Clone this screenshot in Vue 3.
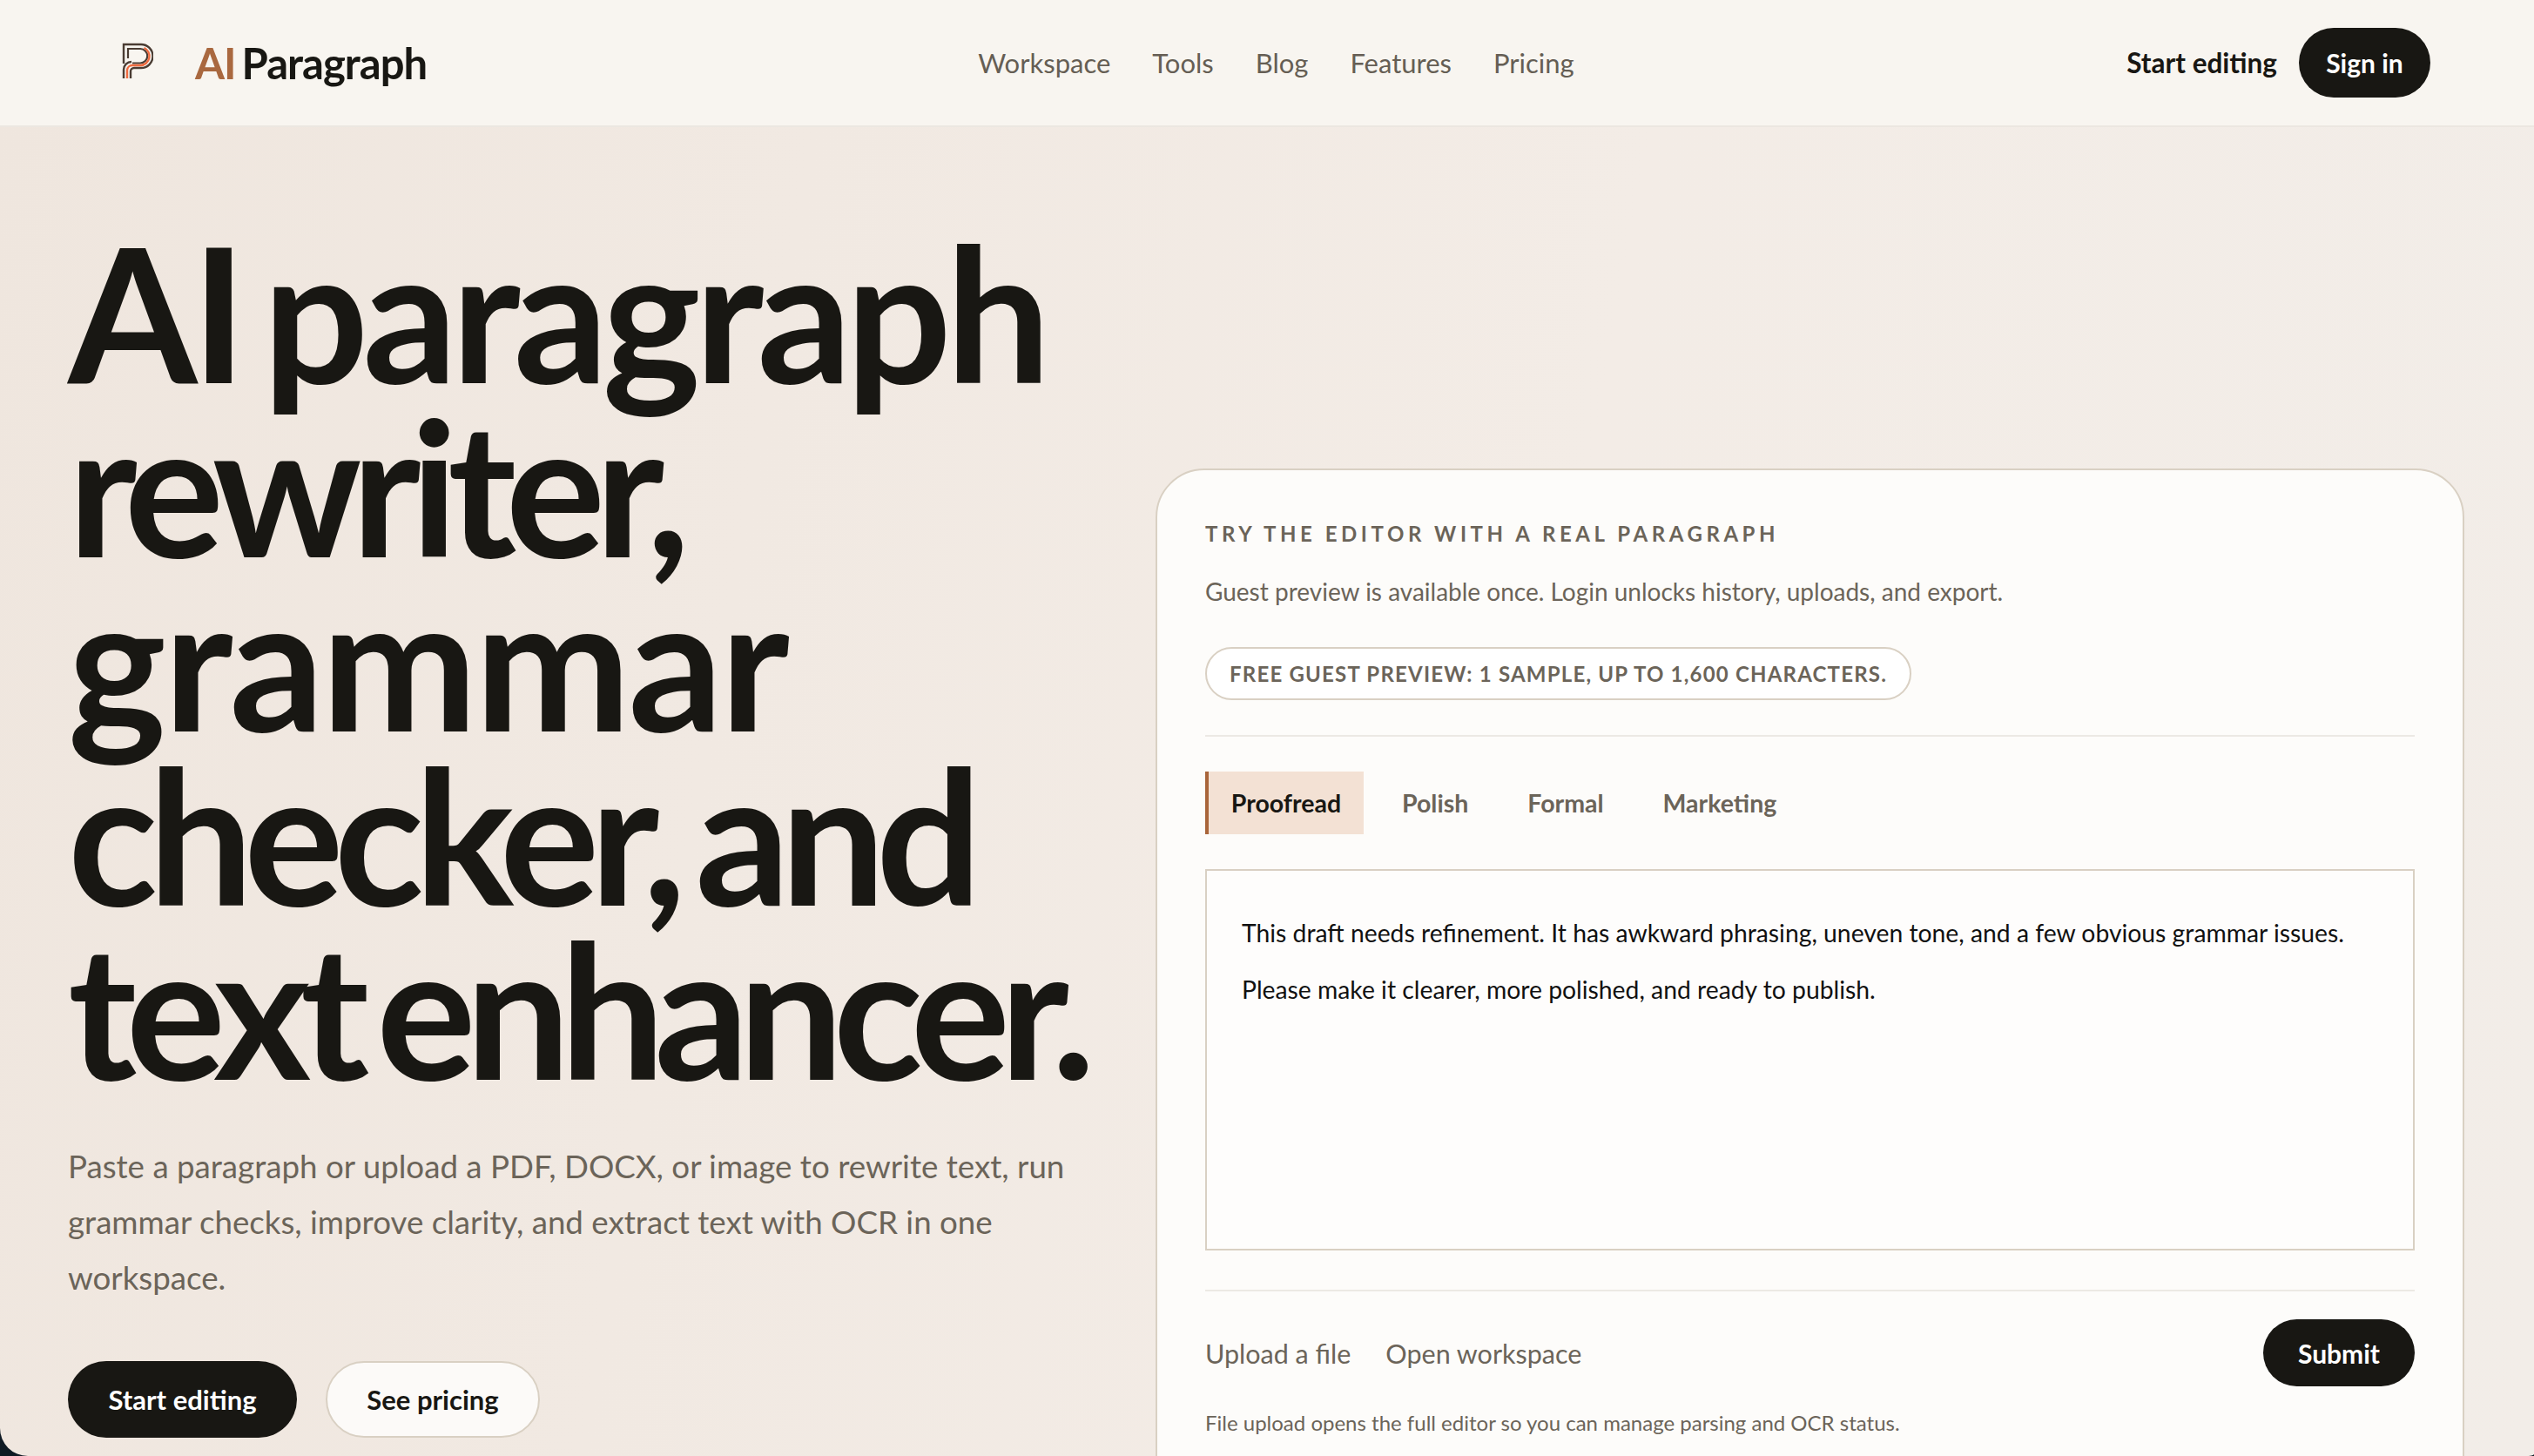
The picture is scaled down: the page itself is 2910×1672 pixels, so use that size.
<template>
  <div class="page">
    <header class="topbar">
      <div class="brand">
        <svg class="logo" viewBox="0 0 36 42" width="36" height="42" fill="none">
          <path d="M2 24V2H22a13.500 13.500 0 0 1 0 27h-8a4 4 0 0 0-4 4V41" stroke="#4a3c33" stroke-width="2.400" />
          <path d="M2 41V31a9 9 0 0 1 9-9" stroke="#4a3c33" stroke-width="2.400" />
          <path d="M7 18V7h14a8 8 0 0 1 0 16.500h-9" stroke="#4a3c33" stroke-width="2.200" />
          <path d="M6 41V31.500a6 6 0 0 1 6-5.500h9.500a10.500 10.500 0 0 0 4-20" stroke="#ee6a3f" stroke-width="2.400" />
        </svg>
        <span class="brand-name"><span class="brand-ai">AI</span> Paragraph</span>
      </div>
      <nav class="nav">
        <a v-for="link in navLinks" :key="link">{{ link }}</a>
      </nav>
      <div class="top-actions">
        <a class="top-link">Start editing</a>
        <button type="button" class="btn btn-dark btn-signin">Sign in</button>
      </div>
    </header>

    <main class="hero">
      <section class="hero-copy">
        <h1>
          <span class="line line-1">AI paragraph</span>
          <span class="line line-2">rewriter,</span>
          <span class="line line-3">grammar</span>
          <span class="line line-4">checker, and</span>
          <span class="line line-5">text enhancer.</span>
        </h1>
        <p class="lead">
          Paste a paragraph or upload a PDF, DOCX, or image to rewrite text, run grammar checks,
          improve clarity, and extract text with OCR in one workspace.
        </p>
        <div class="cta-row">
          <button type="button" class="btn btn-dark btn-large">Start editing</button>
          <button type="button" class="btn btn-light btn-large">See pricing</button>
        </div>
      </section>

      <section class="editor-card">
        <p class="eyebrow">Try the editor with a real paragraph</p>
        <p class="card-sub">Guest preview is available once. Login unlocks history, uploads, and export.</p>
        <span class="pill">Free guest preview: 1 sample, up to 1,600 characters.</span>
        <div class="tabs">
          <button
            v-for="tab in tabs"
            :key="tab"
            type="button"
            class="tab"
            :class="{ active: tab === activeTab }"
            @click="activeTab = tab"
          >
            {{ tab }}
          </button>
        </div>
        <div class="draft">
          <p>This draft needs refinement. It has awkward phrasing, uneven tone, and a few obvious grammar issues.</p>
          <p>Please make it clearer, more polished, and ready to publish.</p>
        </div>
        <div class="card-actions">
          <div class="card-links">
            <a>Upload a file</a>
            <a>Open workspace</a>
          </div>
          <button type="button" class="btn btn-dark btn-submit">Submit</button>
        </div>
        <p class="note">File upload opens the full editor so you can manage parsing and OCR status.</p>
      </section>
    </main>
  </div>
</template>

<script setup>
import { ref } from 'vue';

const navLinks = ['Workspace', 'Tools', 'Blog', 'Features', 'Pricing'];
const tabs = ['Proofread', 'Polish', 'Formal', 'Marketing'];
const activeTab = ref('Proofread');
</script>

<style>
html,
body {
  margin: 0;
  background: #0f1a24;
  overflow: hidden;
}
</style>

<style scoped>
.page {
  width: 2910px;
  height: 1672px;
  overflow: hidden;
  border-radius: 0 0 10px 32px / 0 0 2px 32px;
  background: linear-gradient(100deg, #efe6de 0%, #f3ece6 60%, #f2ede8 100%);
  font-family: Lato, "Noto Sans", sans-serif;
  color: #181713;
}

.topbar {
  height: 144px;
  box-sizing: content-box;
  border-bottom: 2px solid #ece7e1;
  background: #f8f5f0;
  padding: 0 119px 0 140px;
  display: grid;
  grid-template-columns: 1fr auto 1fr;
  align-items: center;
}

.brand {
  display: flex;
  align-items: center;
  gap: 48px;
}

.logo {
  width: 36px;
  height: 42px;
  margin-bottom: 4px;
}

.brand-name {
  font-size: 49px;
  font-weight: 700;
  letter-spacing: -0.02em;
  word-spacing: -4px;
}

.brand-ai {
  color: #a9683f;
}

.nav {
  display: flex;
  gap: 48px;
  font-size: 31px;
  color: #655e54;
}

.top-actions {
  justify-self: end;
  display: flex;
  align-items: center;
  gap: 25px;
}

.top-link {
  font-size: 31.500px;
  font-weight: 700;
}

.btn {
  border-radius: 999px;
  font-family: inherit;
  font-weight: 700;
  cursor: pointer;
}

.btn-dark {
  border: none;
  background: #181713;
  color: #ffffff;
}

.btn-light {
  border: 2px solid #d9d0c3;
  background: #fcfaf8;
  color: #181713;
}

.btn-signin {
  width: 151px;
  height: 80px;
  font-size: 30px;
}

.hero {
  display: grid;
  grid-template-columns: 1249px 1503px;
  padding-left: 78px;
  align-items: start;
}

h1 {
  margin: 0;
  padding-top: 112px;
  width: 1240px;
  font-size: 214px;
  font-weight: 700;
  line-height: 200px;
  word-spacing: -20px;
  color: #181713;
}

.line {
  display: block;
  white-space: nowrap;
}

.line-1 {
  letter-spacing: -6.800px;
}

.line-2 {
  letter-spacing: -11.900px;
}

.line-3 {
  letter-spacing: -3px;
}

.line-4 {
  letter-spacing: -10.800px;
}

.line-5 {
  letter-spacing: -12.100px;
}

.lead {
  margin: 49px 0 0;
  width: 1180px;
  font-size: 36.700px;
  line-height: 64px;
  color: #6b6459;
}

.cta-row {
  display: flex;
  gap: 33px;
  margin-top: 64px;
}

.btn-large {
  height: 88px;
  font-size: 31px;
}

.btn-dark.btn-large {
  width: 263px;
}

.btn-light.btn-large {
  width: 246px;
}

.editor-card {
  margin-top: 392px;
  box-sizing: border-box;
  height: 1200px;
  border: 2px solid #d9d0c3;
  border-radius: 56px;
  background: #fdfcfa;
  padding: 56px 55px;
  display: flex;
  flex-direction: column;
  align-items: flex-start;
}

.eyebrow {
  margin: 2px 0 0;
  font-size: 24px;
  line-height: 30px;
  font-weight: 700;
  letter-spacing: 0.19em;
  text-transform: uppercase;
  color: #6b6459;
}

.card-sub {
  margin: 29px 0 0;
  font-size: 28px;
  line-height: 44px;
  color: #6b6459;
}

.pill {
  margin-top: 42px;
  box-sizing: border-box;
  height: 61px;
  padding: 0 26px;
  display: flex;
  align-items: center;
  border: 2px solid #d9d0c3;
  border-radius: 999px;
  background: #ffffff;
  font-size: 24px;
  font-weight: 700;
  letter-spacing: 0.05em;
  text-transform: uppercase;
  color: #6b6459;
}

.tabs {
  margin-top: 40px;
  align-self: stretch;
  border-top: 2px solid #ece9e4;
  padding-top: 40px;
  display: flex;
}

.tab {
  height: 72px;
  padding: 0 24px;
  border: none;
  border-left: 4px solid transparent;
  background: transparent;
  font-family: inherit;
  font-size: 28.500px;
  font-weight: 700;
  color: #6b6459;
  cursor: pointer;
  margin-right: 16px;
}

.tab.active {
  width: 182px;
  border-left-color: #a9653a;
  background: #f3e1d4;
  color: #181713;
}

.draft {
  margin-top: 40px;
  align-self: stretch;
  box-sizing: border-box;
  height: 438px;
  border: 2px solid #d9d0c3;
  background: #fefdfc;
  padding: 49px 40px 40px;
  font-size: 28.300px;
  line-height: 44px;
  color: #111111;
}

.draft p {
  margin: 0 0 21px;
}

.card-actions {
  margin-top: 45px;
  align-self: stretch;
  border-top: 2px solid #ece9e4;
  padding-top: 32px;
  display: flex;
  justify-content: space-between;
  align-items: center;
}

.card-links {
  display: flex;
  gap: 40px;
  font-size: 30.500px;
  color: #6b6459;
}

.btn-submit {
  width: 174px;
  height: 77px;
  font-size: 30px;
}

.note {
  margin: 25px 0 0;
  font-size: 24px;
  line-height: 34px;
  color: #6b6459;
}
</style>
